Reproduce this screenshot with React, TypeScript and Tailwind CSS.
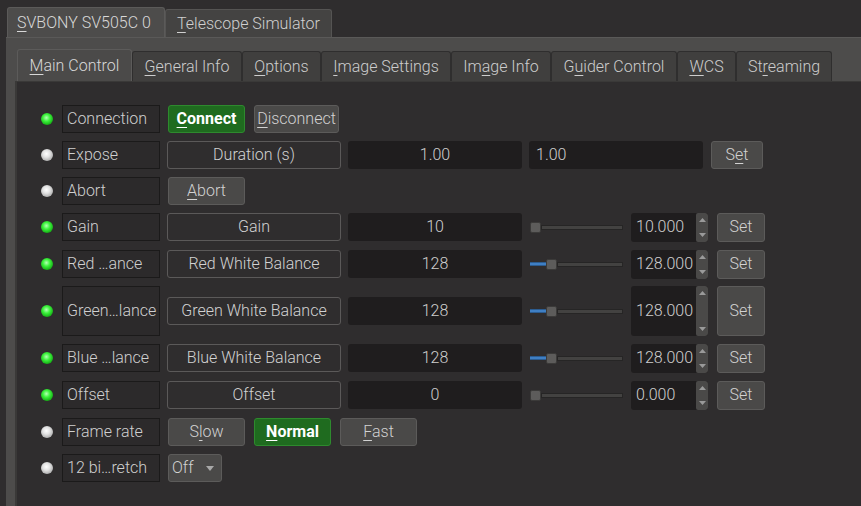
import React from "react";

const U = ({ children }: { children: React.ReactNode }) => (
  <span className="underline decoration-1 underline-offset-[3px]">{children}</span>
);

const Led = ({ on }: { on: boolean }) => (
  <div
    className={
      "w-[12px] h-[12px] rounded-full shrink-0 " +
      (on
        ? "bg-[radial-gradient(circle_at_45%_40%,#b6ffb6_0%,#3df23d_35%,#18b418_70%,#0f7a0f_100%)]"
        : "bg-[radial-gradient(circle_at_45%_40%,#ffffff_0%,#e4e4e4_35%,#b4b4b4_70%,#7a7a7a_100%)]")
    }
  />
);

const Label = ({ children }: { children: React.ReactNode }) => (
  <div className="ml-[9px] w-[98px] h-full shrink-0 border border-[#1b1a1a] bg-[#2c2a2b] flex items-center pl-[4px] whitespace-nowrap overflow-hidden text-[#d0d0d0]">
    {children}
  </div>
);

const Box = ({ children }: { children: React.ReactNode }) => (
  <div className="ml-[7px] w-[174px] h-[28px] shrink-0 border border-[#5b5959] rounded-[3px] flex items-center justify-center text-[#d2d2d2]">
    {children}
  </div>
);

const Input = ({ children, left }: { children: React.ReactNode; left?: boolean }) => (
  <div
    className={
      "ml-[7px] w-[174px] h-[28px] shrink-0 bg-[#1f1d1e] rounded-[3px] flex items-center text-[#cfcfcf] " +
      (left ? "pl-[7px]" : "justify-center")
    }
  >
    {children}
  </div>
);

const Btn = ({
  children,
  green,
  w,
  ml,
}: {
  children: React.ReactNode;
  green?: boolean;
  w: string;
  ml: string;
}) => (
  <div
    className={
      "h-[28px] shrink-0 rounded-[3px] border flex items-center justify-center " +
      w +
      " " +
      ml +
      " " +
      (green
        ? "bg-[#1f6b1f] border-[#2e8a2e] text-white font-bold"
        : "bg-[#4a4948] border-[#5c5b5a] text-[#d2d2d2]")
    }
  >
    {children}
  </div>
);

const Slider = ({ fill }: { fill: boolean }) => (
  <div className="ml-[8px] w-[93px] h-[12px] shrink-0 flex items-center">
    {fill && <div className="w-[16px] h-[4px] bg-[#3f7fc4] border-y border-[#2c5c90]" />}
    <div className="w-[11px] h-[11px] shrink-0 rounded-[2px] bg-[#5d5c5b] border border-[#3b3a39]" />
    <div className="flex-1 h-[5px] bg-[#434241] border border-[#262525]" />
  </div>
);

const Spin = ({ value, tall }: { value: string; tall?: boolean }) => (
  <div
    className={
      "ml-[8px] w-[77px] shrink-0 bg-[#1f1d1e] rounded-[3px] flex overflow-hidden " +
      (tall ? "h-[50px]" : "h-[29px]")
    }
  >
    <div className="flex-1 flex items-center pl-[5px] whitespace-nowrap overflow-hidden text-[#cfcfcf]">
      {value}
    </div>
    <div className="w-[12px] bg-[#4a4948] rounded-[2px] flex flex-col items-center justify-between py-[5px]">
      <svg width="7" height="4" viewBox="0 0 7 4">
        <polygon points="0,4 3.5,0 7,4" fill="#9a9a9a" />
      </svg>
      <svg width="7" height="4" viewBox="0 0 7 4">
        <polygon points="0,0 3.5,4 7,0" fill="#9a9a9a" />
      </svg>
    </div>
  </div>
);

const SetBtn = ({ tall }: { tall?: boolean }) => (
  <div
    className={
      "ml-[9px] w-[48px] shrink-0 rounded-[3px] border bg-[#4a4948] border-[#5c5b5a] text-[#d2d2d2] flex items-center justify-center " +
      (tall ? "h-[50px]" : "h-[29px]")
    }
  >
    Set
  </div>
);

const NumRow = ({
  on,
  label,
  name,
  value,
  spin,
  fill,
  tall,
  mt,
}: {
  on: boolean;
  label: string;
  name: string;
  value: string;
  spin: string;
  fill: boolean;
  tall?: boolean;
  mt: string;
}) => (
  <div className={"flex items-center " + mt + " " + (tall ? "h-[50px]" : "h-[28px]")}>
    <Led on={on} />
    <Label>{label}</Label>
    <Box>{name}</Box>
    <Input>{value}</Input>
    <Slider fill={fill} />
    <Spin value={spin} tall={tall} />
    <SetBtn tall={tall} />
  </div>
);

const innerTabs: { w: string; node: React.ReactNode; sel?: boolean }[] = [
  { w: "w-[115px]", node: <><U>M</U>ain Control</>, sel: true },
  { w: "w-[110px]", node: <><U>G</U>eneral Info</> },
  { w: "w-[79px]", node: <><U>O</U>ptions</> },
  { w: "w-[130px]", node: <><U>I</U>mage Settings</> },
  { w: "w-[100px]", node: <>Im<U>a</U>ge Info</> },
  { w: "w-[126px]", node: <>G<U>u</U>ider Control</> },
  { w: "w-[59px]", node: <><U>W</U>CS</> },
  { w: "w-[96px]", node: <>St<U>r</U>eaming</> },
];

export default function App() {
  return (
    <div className="w-[861px] h-[506px] bg-[#2f2d2e] overflow-hidden font-['Roboto',sans-serif] font-light text-[16px] leading-none text-[#d4d4d4] flex flex-col">
      {/* outer tabs */}
      <div className="flex items-end pl-[7px] pt-[7px] h-[37px] shrink-0">
        <div className="w-[158px] h-[30px] bg-[#4d4c4b] rounded-t-[3px] border border-b-0 border-[#5b5a59] flex items-center pl-[9px] text-[#d8d8d8]">
          <span>
            <U>S</U>VBONY SV505C 0
          </span>
        </div>
        <div className="w-[167px] h-[28px] bg-[#444342] rounded-t-[3px] border border-b-0 border-[#555453] flex items-center pl-[11px] text-[#d0d0d0]">
          <span>
            <U>T</U>elescope Simulator
          </span>
        </div>
      </div>
      {/* outer panel */}
      <div className="flex-1 ml-[6px] bg-[#4d4c4b] border-t border-[#5a5958] pt-[11px] pl-[9px] flex flex-col">
        <div className="flex items-end h-[32px] pl-[2px] shrink-0">
          {innerTabs.map((t, i) => (
            <div
              key={i}
              className={
                t.w +
                " shrink-0 rounded-t-[3px] border border-b-0 flex items-center justify-center " +
                (t.sel
                  ? "h-[32px] bg-[#4b4a49] border-[#5c5b5a] text-[#d8d8d8]"
                  : "h-[30px] bg-[#403f3e] border-[#2f2e2e] text-[#cdcdcd]")
              }
            >
              <span>{t.node}</span>
            </div>
          ))}
        </div>
        <div className="flex-1 bg-[#2f2d2e] border-l-2 border-t border-[#3a3938] pl-[24px] pt-[23px] flex flex-col">
          {/* Connection */}
          <div className="flex items-center h-[28px]">
            <Led on />
            <Label>Connection</Label>
            <Btn green w="w-[77px]" ml="ml-[8px]">
              <U>C</U>onnect
            </Btn>
            <Btn w="w-[85px]" ml="ml-[9px]">
              <span>
                <U>D</U>isconnect
              </span>
            </Btn>
          </div>
          {/* Expose */}
          <div className="flex items-center h-[28px] mt-[8px]">
            <Led on={false} />
            <Label>Expose</Label>
            <Box>Duration (s)</Box>
            <Input>1.00</Input>
            <Input left>1.00</Input>
            <Btn w="w-[52px]" ml="ml-[8px]">
              <span>
                S<U>e</U>t
              </span>
            </Btn>
          </div>
          {/* Abort */}
          <div className="flex items-center h-[28px] mt-[8px]">
            <Led on={false} />
            <Label>Abort</Label>
            <Btn w="w-[77px]" ml="ml-[8px]">
              <span>
                <U>A</U>bort
              </span>
            </Btn>
          </div>
          <NumRow mt="mt-[8px]" on label="Gain" name="Gain" value="10" spin="10.000" fill={false} />
          <NumRow mt="mt-[9px]" on label="Red …ance" name="Red White Balance" value="128" spin="128.000" fill />
          <NumRow mt="mt-[8px]" on label="Green…lance" name="Green White Balance" value="128" spin="128.000" fill tall />
          <NumRow mt="mt-[8px]" on label="Blue …lance" name="Blue White Balance" value="128" spin="128.000" fill />
          <NumRow mt="mt-[9px]" on label="Offset" name="Offset" value="0" spin="0.000" fill={false} />
          {/* Frame rate */}
          <div className="flex items-center h-[28px] mt-[9px]">
            <Led on={false} />
            <Label>Frame rate</Label>
            <Btn w="w-[77px]" ml="ml-[8px]">
              <span>
                S<U>l</U>ow
              </span>
            </Btn>
            <Btn green w="w-[77px]" ml="ml-[9px]">
              <span>
                <U>N</U>ormal
              </span>
            </Btn>
            <Btn w="w-[77px]" ml="ml-[9px]">
              <span>
                <U>F</U>ast
              </span>
            </Btn>
          </div>
          {/* 12 bit */}
          <div className="flex items-center h-[28px] mt-[8px]">
            <Led on={false} />
            <Label>12 bi…retch</Label>
            <div className="ml-[8px] w-[54px] h-[28px] shrink-0 bg-[#4a4948] border border-[#5c5b5a] rounded-[3px] flex items-center justify-between pl-[3px] pr-[7px] text-[#d2d2d2]">
              <span>Off</span>
              <svg width="8" height="5" viewBox="0 0 8 5">
                <polygon points="0,0 4,5 8,0" fill="#a8a8a8" />
              </svg>
            </div>
          </div>
        </div>
      </div>
    </div>
  );
}
